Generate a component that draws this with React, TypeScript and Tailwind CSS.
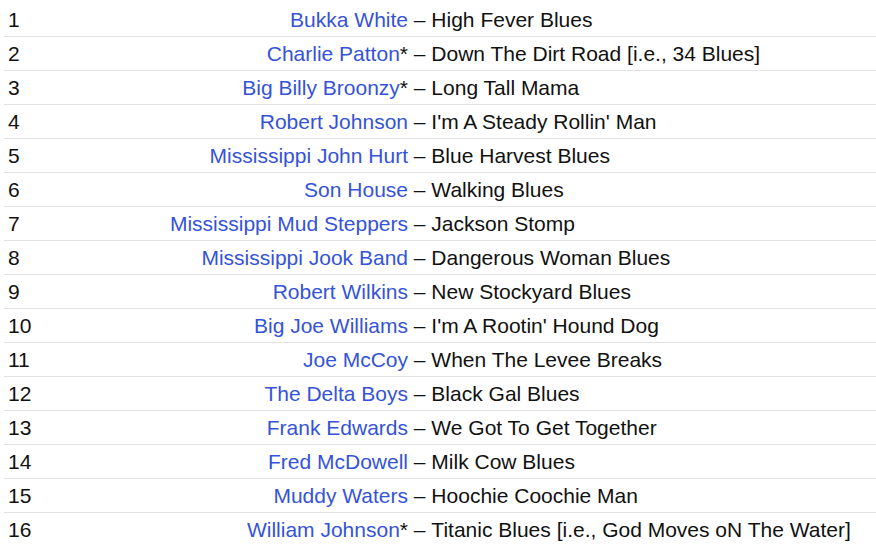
const tracks: [string, boolean, string][] = [
  ['Bukka White', false, 'High Fever Blues'],
  ['Charlie Patton', true, 'Down The Dirt Road [i.e., 34 Blues]'],
  ['Big Billy Broonzy', true, 'Long Tall Mama'],
  ['Robert Johnson', false, "I'm A Steady Rollin' Man"],
  ['Mississippi John Hurt', false, 'Blue Harvest Blues'],
  ['Son House', false, 'Walking Blues'],
  ['Mississippi Mud Steppers', false, 'Jackson Stomp'],
  ['Mississippi Jook Band', false, 'Dangerous Woman Blues'],
  ['Robert Wilkins', false, 'New Stockyard Blues'],
  ['Big Joe Williams', false, "I'm A Rootin' Hound Dog"],
  ['Joe McCoy', false, 'When The Levee Breaks'],
  ['The Delta Boys', false, 'Black Gal Blues'],
  ['Frank Edwards', false, 'We Got To Get Together'],
  ['Fred McDowell', false, 'Milk Cow Blues'],
  ['Muddy Waters', false, 'Hoochie Coochie Man'],
  ['William Johnson', true, 'Titanic Blues [i.e., God Moves oN The Water]'],
];

export default function App() {
  return (
    <div className="bg-white w-[876px] h-[552px] overflow-hidden pt-[3px] pl-1 font-['Liberation_Sans',Arial,sans-serif] text-[21px] text-[#111]">
      {tracks.map(([artist, star, title], i) => (
        <div
          key={i}
          className={`flex items-center h-[34px] whitespace-nowrap ${i < tracks.length - 1 ? 'border-b border-[#e2e2e2]' : ''}`}
        >
          <div className="w-[404px] flex justify-between pl-1">
            <span>{i + 1}</span>
            <span>
              <a href="#" className="text-[#3553d8]">{artist}</a>
              {star && '*'}
            </span>
          </div>
          <span>&nbsp;–&nbsp;{title}</span>
        </div>
      ))}
    </div>
  );
}
